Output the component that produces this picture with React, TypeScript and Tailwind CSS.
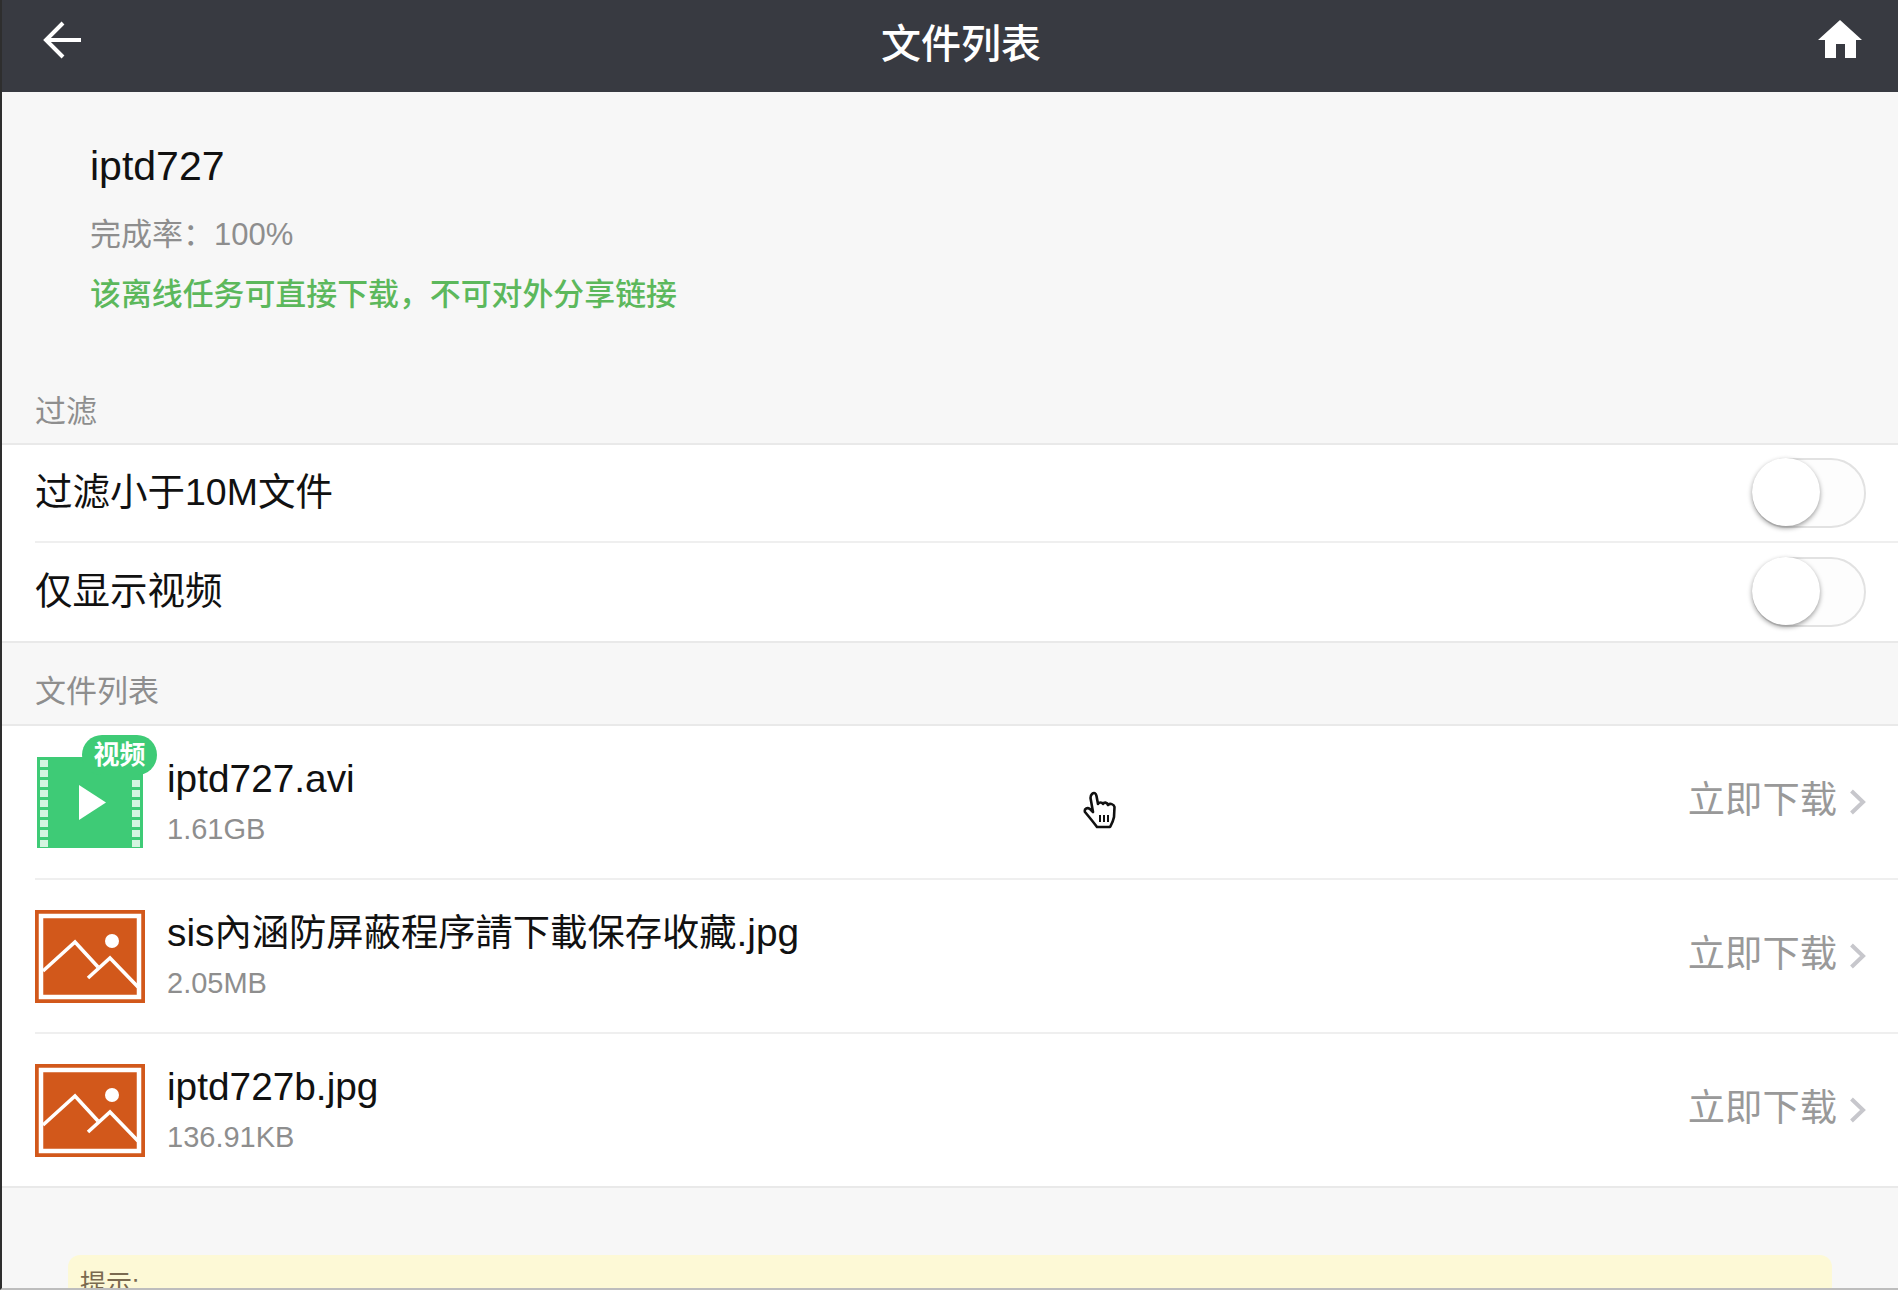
import React from "react";

const FONT = "font-['Liberation_Sans','Noto_Sans_CJK_SC',sans-serif]";

function Toggle() {
  return (
    <div className="relative h-[70px] w-[114px] rounded-full border-2 border-[#e2e2e2] bg-[#fdfdfd]">
      <div className="absolute left-[-2px] top-[-2px] h-[68px] w-[68px] rounded-full bg-white shadow-[0_2px_5px_rgba(0,0,0,0.4)]" />
    </div>
  );
}

function Chevron() {
  return (
    <svg width="17" height="26" viewBox="0 0 17 26" fill="none" className="ml-[12px]">
      <path d="M2.5 2 L14 13 L2.5 24" stroke="#c7c7cc" strokeWidth="4" />
    </svg>
  );
}

function VideoIcon() {
  const rowsL = [0, 1, 2, 3, 4, 5, 6, 7, 8];
  const rowsR = [2, 3, 4, 5, 6, 7, 8];
  return (
    <div className="relative h-[93px] w-[110px] shrink-0">
      <svg width="110" height="93" viewBox="0 0 110 93" className="block">
        <rect x="2" y="1" width="106" height="91" fill="#3ecb76" />
        {rowsL.map((r) => (
          <rect key={r} x="5" y={4 + r * 10} width="8" height="7" fill="#d4f5e0" />
        ))}
        {rowsR.map((r) => (
          <rect key={r} x="97" y={4 + r * 10} width="8" height="7" fill="#d4f5e0" />
        ))}
        <path d="M44 29 L71 46.500 L44 64 Z" fill="#ffffff" />
      </svg>
      <div className="absolute left-[47px] top-[-21px] flex h-[40px] w-[75px] items-center justify-center rounded-[20px] bg-[#3ecb76] text-[26px] font-bold leading-none text-white">
        视频
      </div>
    </div>
  );
}

function ImageIcon() {
  return (
    <svg width="110" height="93" viewBox="0 0 110 93" fill="none" className="block shrink-0">
      <rect width="110" height="93" fill="#d2581b" />
      <rect x="6" y="6" width="98" height="81" stroke="#ffffff" strokeWidth="4.5" />
      <path d="M8 61 L40 32 L63 57" stroke="#ffffff" strokeWidth="3.6" />
      <path d="M53 68 L75 48 L103 77" stroke="#ffffff" strokeWidth="3.6" />
      <circle cx="77" cy="31" r="7" fill="#ffffff" />
    </svg>
  );
}

function FileRow({ icon, name, size, last, h }: { icon: React.ReactNode; name: React.ReactNode; size: string; last?: boolean; h: string }) {
  return (
    <div className="pl-[33px]">
      <div className={`flex ${h} items-center pr-[32px] ${last ? "" : "border-b-2 border-[#efefef]"}`}>
        {icon}
        <div className="ml-[22px] flex min-w-0 flex-1 flex-col pt-[4px]">
          <div className="text-[38.8px] leading-[48px] text-[#111]">{name}</div>
          <div className="mt-[2px] text-[29px] leading-[48px] text-[#8e8e8e]">{size}</div>
        </div>
        <span className="mb-[3px] text-[37.3px] leading-none text-[#999]">立即下载</span>
        <Chevron />
      </div>
    </div>
  );
}

function Switchrow({ label, border }: { label: string; border?: boolean }) {
  return (
    <div className="pl-[33px]">
      <div className={`flex h-[98px] items-center justify-between pr-[32px] ${border ? "border-b-2 border-[#efefef]" : ""}`}>
        <span className="text-[37.5px] leading-none text-[#111]">{label}</span>
        <Toggle />
      </div>
    </div>
  );
}

export default function App() {
  return (
    <div className={`${FONT} flex h-[1290px] flex-col overflow-hidden border-b-2 border-l-[2px] border-b-[#bdbdbd] border-l-[#2e2e2e] bg-[#f7f7f7]`}>
      <header className="flex h-[92px] shrink-0 items-center bg-[#383a41] text-white">
        <div className="w-[102px] pl-[41px]">
          <svg width="38" height="38" viewBox="0 0 38 38" fill="none" className="mt-[-13px]">
            <path d="M38 19 H3 M20 2 L3 19 L20 36" stroke="#ffffff" strokeWidth="4" />
          </svg>
        </div>
        <div className="mt-[-5px] flex-1 text-center text-[40px] font-medium leading-none">文件列表</div>
        <div className="flex w-[80px] items-center">
          <svg width="44" height="38" viewBox="0 0 44 38" fill="#ffffff" className="mt-[-15px]">
            <path d="M22 0 L44 20 H38 V38 H27 V24 H18 V38 H7 V20 H0 Z" />
          </svg>
        </div>
      </header>

      <section className="pl-[88px] pt-[50px]">
        <div className="text-[41px] leading-[48px] text-[#111]">iptd727</div>
        <div className="mt-[25px] text-[31px] leading-[40px] text-[#8e8e8e]">完成率：100%</div>
        <div className="mt-[20px] text-[30.9px] font-medium leading-[40px] text-[#5cb85c]">该离线任务可直接下载，不可对外分享链接</div>
      </section>

      <div className="pl-[33px] pt-[77px] pb-[11px] text-[31px] leading-[40px] text-[#8e8e8e]">过滤</div>

      <section className="border-y-2 border-[#e9e9e9] bg-white">
        <Switchrow label="过滤小于10M文件" border />
        <Switchrow label="仅显示视频" />
      </section>

      <div className="pl-[33px] pt-[29px] pb-[12px] text-[31px] leading-[40px] text-[#8e8e8e]">文件列表</div>

      <section className="border-y-2 border-[#e9e9e9] bg-white">
        <FileRow h="h-[154px]" icon={<VideoIcon />} name="iptd727.avi" size="1.61GB" />
        <FileRow
          h="h-[154px]"
          icon={<ImageIcon />}
          name={
            <>
              sis<span className="text-[37.3px]">內涵防屏蔽程序請下載保存收藏</span>.jpg
            </>
          }
          size="2.05MB"
        />
        <FileRow h="h-[152px]" icon={<ImageIcon />} name="iptd727b.jpg" size="136.91KB" last />
      </section>

      <div className="mx-[66px] mt-[67px] h-[200px] shrink-0 rounded-t-[12px] bg-[#fdf9d6] px-[12px] pt-[13px] text-[26px] leading-[32px] text-[#7a6a50]">
        提示:
      </div>

      <svg width="36" height="38" viewBox="0 0 36 38" className="absolute left-[1083px] top-[791px]" fill="#ffffff" stroke="#111111" strokeWidth="2.6" strokeLinejoin="round">
        <path d="M9 3 C11 1 13 2 13.5 5 L15 13 C16 11 19 11 20 13 C21 11 24 11 25 14 C27 12 31 13 31.500 16 L31 26 C30 31 28 34 27 36 L14 36 C11 32 7 27 2 21 C1 18 4 16 7 18 L10 21 L7.500 7 C7.500 5 8 4 9 3 Z" />
        <path d="M17 24 V31 M21 24 V31 M25 24 V31" fill="none" strokeWidth="2" />
      </svg>
    </div>
  );
}
